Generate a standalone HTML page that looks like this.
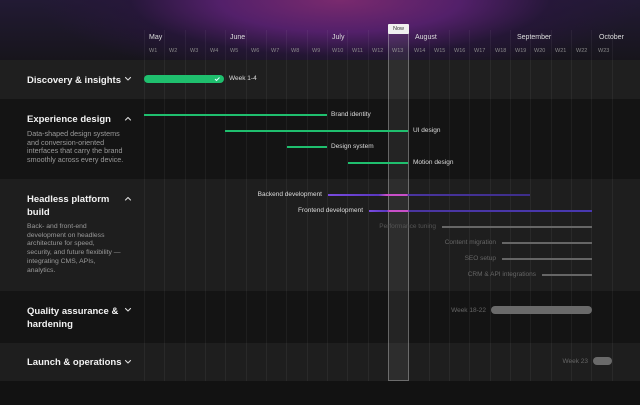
<!DOCTYPE html>
<html><head><meta charset="utf-8"><style>
*{margin:0;padding:0;box-sizing:border-box}
body{width:640px;height:405px;overflow:hidden;background:#121212;font-family:"Liberation Sans",sans-serif;position:relative;color:#eee}
.abs{position:absolute}
.hdr{left:0;top:0;width:640px;height:60px;background:radial-gradient(ellipse 300px 80px at 340px 0px,#7a2a6e 0%,#53206a 40%,rgba(40,22,60,0.7) 70%,rgba(20,18,24,0) 100%),linear-gradient(#221a34,#17151c)}
.row{left:0;width:640px}
.t{font-size:9.5px;font-weight:bold;color:#f2f2f2;line-height:13px}
.d{font-size:7px;color:#9a9a9a;line-height:8.7px;white-space:nowrap}
.m{font-size:7px;color:#ddd}
.w{font-size:5.5px;color:#888}
.lbl{font-size:6.5px;color:#ddd;white-space:nowrap}
.r{text-align:right}
.g{background:#1fbf6e;height:2px}
</style></head><body>
<div class="abs hdr"></div>
<div class="abs row" style="top:60px;height:39px;background:#1f1f1f"></div>
<div class="abs row" style="top:99px;height:80px;background:#141414"></div>
<div class="abs row" style="top:179px;height:112px;background:#1e1e1e"></div>
<div class="abs row" style="top:291px;height:52px;background:#141414"></div>
<div class="abs row" style="top:343px;height:38px;background:#1e1e1e"></div>
<svg class="abs" style="left:0;top:30px" width="640" height="351">
<g stroke="#ffffff" stroke-opacity="0.05" stroke-width="1">
<line x1="144.5" y1="0" x2="144.5" y2="351"/><line x1="164.5" y1="0" x2="164.5" y2="351"/><line x1="185.5" y1="0" x2="185.5" y2="351"/><line x1="205.5" y1="0" x2="205.5" y2="351"/><line x1="225.5" y1="0" x2="225.5" y2="351"/><line x1="246.5" y1="0" x2="246.5" y2="351"/><line x1="266.5" y1="0" x2="266.5" y2="351"/><line x1="286.5" y1="0" x2="286.5" y2="351"/><line x1="307.5" y1="0" x2="307.5" y2="351"/><line x1="327.5" y1="0" x2="327.5" y2="351"/><line x1="347.5" y1="0" x2="347.5" y2="351"/><line x1="368.5" y1="0" x2="368.5" y2="351"/><line x1="429.5" y1="0" x2="429.5" y2="351"/><line x1="449.5" y1="0" x2="449.5" y2="351"/><line x1="469.5" y1="0" x2="469.5" y2="351"/><line x1="490.5" y1="0" x2="490.5" y2="351"/><line x1="510.5" y1="0" x2="510.5" y2="351"/><line x1="530.5" y1="0" x2="530.5" y2="351"/><line x1="551.5" y1="0" x2="551.5" y2="351"/><line x1="571.5" y1="0" x2="571.5" y2="351"/><line x1="591.5" y1="0" x2="591.5" y2="351"/><line x1="612.5" y1="0" x2="612.5" y2="351"/>
</g>
<g fill="none" stroke="#dddddd" stroke-width="1.1" stroke-linecap="round" stroke-linejoin="round">
<polyline points="125.5,47.5 128,50 130.5,47.5"/>
<polyline points="125.5,90 128,87.5 130.5,90"/>
<polyline points="125.5,170 128,167.5 130.5,170"/>
<polyline points="125.5,278.5 128,281 130.5,278.5"/>
<polyline points="125.5,330.5 128,333 130.5,330.5"/>
</g>
</svg>
<div class="abs m" style="left:149px;top:34px">May</div>
<div class="abs m" style="left:230px;top:34px">June</div>
<div class="abs m" style="left:332px;top:34px">July</div>
<div class="abs m" style="left:415px;top:34px">August</div>
<div class="abs m" style="left:517px;top:34px">September</div>
<div class="abs m" style="left:599px;top:34px">October</div>
<div class="abs" style="left:0;top:48px;width:640px">
<span class="abs w" style="left:149px">W1</span><span class="abs w" style="left:169px">W2</span><span class="abs w" style="left:190px">W3</span><span class="abs w" style="left:210px">W4</span><span class="abs w" style="left:230px">W5</span><span class="abs w" style="left:251px">W6</span><span class="abs w" style="left:271px">W7</span><span class="abs w" style="left:291px">W8</span><span class="abs w" style="left:312px">W9</span><span class="abs w" style="left:332px">W10</span><span class="abs w" style="left:352px">W11</span><span class="abs w" style="left:372px">W12</span><span class="abs w" style="left:392px">W13</span><span class="abs w" style="left:414px">W14</span><span class="abs w" style="left:434px">W15</span><span class="abs w" style="left:454px">W16</span><span class="abs w" style="left:474px">W17</span><span class="abs w" style="left:495px">W18</span><span class="abs w" style="left:515px">W19</span><span class="abs w" style="left:534px">W20</span><span class="abs w" style="left:555px">W21</span><span class="abs w" style="left:576px">W22</span><span class="abs w" style="left:598px">W23</span>
</div>
<div class="abs" style="left:388px;top:33px;width:21px;height:348px;background:rgba(255,255,255,0.07);border:1px solid rgba(255,255,255,0.3)"></div>
<div class="abs" style="left:388px;top:24px;width:21px;height:10px;background:#f0f0f0;color:#333;font-size:5.5px;text-align:center;line-height:10px;border-radius:1px">Now</div>
<div class="abs t" style="left:27px;top:74px">Discovery &amp; insights</div>
<div class="abs t" style="left:27px;top:113px">Experience design</div>
<div class="abs d" style="left:27px;top:130px;font-size:7.2px">Data-shaped design systems<br>and conversion-oriented<br>interfaces that carry the brand<br>smoothly across every device.</div>
<div class="abs t" style="left:27px;top:193px;line-height:13px;width:90px">Headless platform build</div>
<div class="abs d" style="left:27px;top:223px;font-size:6.8px">Back- and front-end<br>development on headless<br>architecture for speed,<br>security, and future flexibility —<br>integrating CMS, APIs,<br>analytics.</div>
<div class="abs t" style="left:27px;top:305px;width:95px">Quality assurance &amp; hardening</div>
<div class="abs t" style="left:27px;top:356px">Launch &amp; operations</div>
<div class="abs" style="left:144px;top:75px;width:80px;height:8px;background:#1fbf6e;border-radius:4px"></div>
<svg class="abs" style="left:214px;top:76px" width="7" height="6"><polyline points="1,3 2.5,4.5 5.5,1.5" fill="none" stroke="#dff" stroke-width="1"/></svg>
<div class="abs lbl" style="left:229px;top:75px">Week 1-4</div>
<div class="abs g" style="left:144px;top:114px;width:183px"></div><div class="abs lbl" style="left:331px;top:111px">Brand identity</div>
<div class="abs g" style="left:225px;top:130px;width:183px"></div><div class="abs lbl" style="left:413px;top:127px">UI design</div>
<div class="abs g" style="left:287px;top:146px;width:40px"></div><div class="abs lbl" style="left:331px;top:143px">Design system</div>
<div class="abs g" style="left:348px;top:162px;width:60px"></div><div class="abs lbl" style="left:413px;top:159px">Motion design</div>
<div class="abs" style="left:328px;top:194px;width:202px;height:2px;background:linear-gradient(90deg,#7a4be0,#5a38c0 25%,#c84fc8 29%,#c84fc8 39%,#4a35a0 40%,#3d2e8a)"></div>
<div class="abs lbl r" style="right:318px;top:191px">Backend development</div>
<div class="abs" style="left:369px;top:210px;width:223px;height:2px;background:linear-gradient(90deg,#7a4be0,#5a38c0 8%,#c84fc8 9%,#c84fc8 17.5%,#4a35a0 18%,#4838b0)"></div>
<div class="abs lbl r" style="right:277px;top:207px">Frontend development</div>
<div class="abs" style="left:442px;top:226px;width:150px;height:2px;background:#666"></div><div class="abs lbl r" style="right:204px;top:223px;color:#555">Performance tuning</div>
<div class="abs" style="left:502px;top:242px;width:90px;height:2px;background:#666"></div><div class="abs lbl r" style="right:144px;top:239px;color:#666">Content migration</div>
<div class="abs" style="left:502px;top:258px;width:90px;height:2px;background:#666"></div><div class="abs lbl r" style="right:144px;top:255px;color:#666">SEO setup</div>
<div class="abs" style="left:542px;top:274px;width:50px;height:2px;background:#666"></div><div class="abs lbl r" style="right:104px;top:271px;color:#666">CRM &amp; API integrations</div>
<div class="abs" style="left:491px;top:306px;width:101px;height:8px;background:#6a6a6a;border-radius:4px"></div><div class="abs lbl r" style="right:154px;top:307px;color:#666">Week 18-22</div>
<div class="abs" style="left:593px;top:357px;width:19px;height:8px;background:#6a6a6a;border-radius:4px"></div><div class="abs lbl r" style="right:52px;top:358px;color:#666">Week 23</div>
</body></html>
